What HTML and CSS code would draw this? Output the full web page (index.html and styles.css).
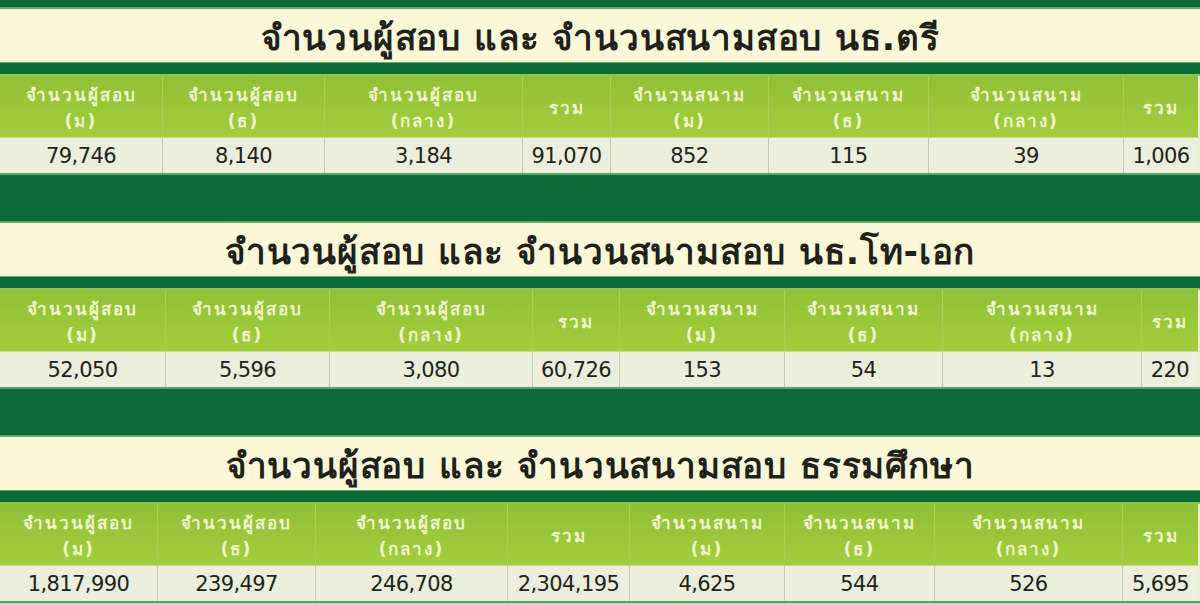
FILE: index.html
```html
<!DOCTYPE html>
<html lang="th">
<head>
<meta charset="utf-8">
<title>จำนวนผู้สอบ และ จำนวนสนามสอบ</title>
<link rel="stylesheet" href="styles.css">
</head>
<body>
<div class="page">
  <section class="block">
    <h2 class="title">จำนวนผู้สอบ และ จำนวนสนามสอบ นธ.ตรี</h2>
    <div class="grid g1">
      <div class="hd">จำนวนผู้สอบ<br>(ม)</div>
      <div class="hd">จำนวนผู้สอบ<br>(ธ)</div>
      <div class="hd">จำนวนผู้สอบ<br>(กลาง)</div>
      <div class="hd">รวม</div>
      <div class="hd">จำนวนสนาม<br>(ม)</div>
      <div class="hd">จำนวนสนาม<br>(ธ)</div>
      <div class="hd">จำนวนสนาม<br>(กลาง)</div>
      <div class="hd">รวม</div>
      <div class="cell">79,746</div>
      <div class="cell">8,140</div>
      <div class="cell">3,184</div>
      <div class="cell">91,070</div>
      <div class="cell">852</div>
      <div class="cell">115</div>
      <div class="cell">39</div>
      <div class="cell">1,006</div>
    </div>
  </section>
  <section class="block">
    <h2 class="title">จำนวนผู้สอบ และ จำนวนสนามสอบ นธ.โท-เอก</h2>
    <div class="grid g2">
      <div class="hd">จำนวนผู้สอบ<br>(ม)</div>
      <div class="hd">จำนวนผู้สอบ<br>(ธ)</div>
      <div class="hd">จำนวนผู้สอบ<br>(กลาง)</div>
      <div class="hd">รวม</div>
      <div class="hd">จำนวนสนาม<br>(ม)</div>
      <div class="hd">จำนวนสนาม<br>(ธ)</div>
      <div class="hd">จำนวนสนาม<br>(กลาง)</div>
      <div class="hd">รวม</div>
      <div class="cell">52,050</div>
      <div class="cell">5,596</div>
      <div class="cell">3,080</div>
      <div class="cell">60,726</div>
      <div class="cell">153</div>
      <div class="cell">54</div>
      <div class="cell">13</div>
      <div class="cell">220</div>
    </div>
  </section>
  <section class="block">
    <h2 class="title">จำนวนผู้สอบ และ จำนวนสนามสอบ ธรรมศึกษา</h2>
    <div class="grid g3">
      <div class="hd">จำนวนผู้สอบ<br>(ม)</div>
      <div class="hd">จำนวนผู้สอบ<br>(ธ)</div>
      <div class="hd">จำนวนผู้สอบ<br>(กลาง)</div>
      <div class="hd">รวม</div>
      <div class="hd">จำนวนสนาม<br>(ม)</div>
      <div class="hd">จำนวนสนาม<br>(ธ)</div>
      <div class="hd">จำนวนสนาม<br>(กลาง)</div>
      <div class="hd">รวม</div>
      <div class="cell">1,817,990</div>
      <div class="cell">239,497</div>
      <div class="cell">246,708</div>
      <div class="cell">2,304,195</div>
      <div class="cell">4,625</div>
      <div class="cell">544</div>
      <div class="cell">526</div>
      <div class="cell">5,695</div>
    </div>
  </section>
</div>
</body>
</html>
```
FILE: styles.css
```css
html, body {
  margin: 0;
  padding: 0;
}
body {
  background: #0b6a35;
  width: 1200px;
  height: 603px;
  overflow: hidden;
  font-family: Tahoma, "DejaVu Sans", "Noto Sans", sans-serif;
}
.page {
  display: flex;
  flex-direction: column;
  gap: 46px;
  padding-top: 7px;
}
.block {
  display: flex;
  flex-direction: column;
}
.title {
  margin: 0;
  height: 56px;
  box-sizing: border-box;
  background: #fcf7d8;
  border-top: 2px solid #62ad6e;
  border-bottom: 1px solid #62ad6e;
  display: flex;
  align-items: center;
  justify-content: center;
  font-size: 35px;
  font-weight: bold;
  letter-spacing: 0.8px;
  color: #1e2218;
  padding-top: 4px;
}
.grid {
  display: grid;
  margin-top: 11px;
  border-top: 2px solid #8fc24a;
  grid-template-rows: 62px 35px;
  border-bottom: 2px solid #59a368;
}
.g1 { grid-template-columns: 163px 162px 198px 88px 158px 160px 195px 76px; }
.g2 { grid-template-columns: 166px 164px 203px 87px 165px 158px 199px 58px; }
.g3 { grid-template-columns: 158px 158px 192px 122px 155px 150px 188px 77px; }
.hd {
  background: linear-gradient(#90c036, #a4cd3d);
  color: #eef5cc;
  font-size: 17px;
  font-weight: bold;
  letter-spacing: 2px;
  line-height: 26px;
  display: flex;
  align-items: center;
  justify-content: center;
  text-align: center;
  border-right: 1px solid #a6cf58;
  border-bottom: 1px solid #c7de92;
  padding-top: 2px;
  box-sizing: border-box;
}
.cell {
  background: #ebeedd;
  color: #1f2419;
  font-size: 21px;
  display: flex;
  align-items: center;
  justify-content: center;
  border-right: 1px solid #c3c8b0;
  font-family: "DejaVu Sans", Tahoma, sans-serif;
  letter-spacing: -0.6px;
}
.hd:nth-child(8), .cell:nth-child(16) {
  border-right: 2px solid #e6eed6;
}
```
